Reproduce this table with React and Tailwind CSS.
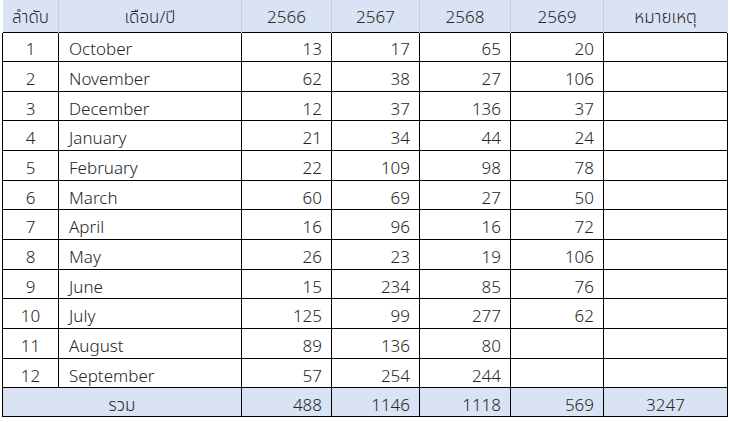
import React from 'react';

const rows = [
  [1, 'October', 13, 17, 65, 20],
  [2, 'November', 62, 38, 27, 106],
  [3, 'December', 12, 37, 136, 37],
  [4, 'January', 21, 34, 44, 24],
  [5, 'February', 22, 109, 98, 78],
  [6, 'March', 60, 69, 27, 50],
  [7, 'April', 16, 96, 16, 72],
  [8, 'May', 26, 23, 19, 106],
  [9, 'June', 15, 234, 85, 76],
  [10, 'July', 125, 99, 277, 62],
  [11, 'August', 89, 136, 80, ''],
  [12, 'September', 57, 254, 244, ''],
];

export default function App() {
  return (
    <div className="w-[730px] h-[422px] bg-white pl-[2px] text-[#262626] text-[17px] font-light" style={{ fontFamily: '"Noto Sans", "Noto Sans Thai", "DejaVu Sans", sans-serif' }}>
      <table className="border-collapse table-fixed w-[725px]">
        <colgroup>
          <col className="w-[56px]" />
          <col className="w-[183px]" />
          <col className="w-[90px]" />
          <col className="w-[88px]" />
          <col className="w-[91px]" />
          <col className="w-[93px]" />
          <col className="w-[124px]" />
        </colgroup>
        <thead>
          <tr className="h-[32px] bg-[#dae3f3]">
            <th className="font-light border-x border-[#c5cee0] border-l-transparent pt-[2px]">ลำดับ</th>
            <th className="font-light border-x border-[#c5cee0] pt-[2px]">เดือน/ปี</th>
            <th className="font-light border-x border-[#c5cee0] pt-[2px]">2566</th>
            <th className="font-light border-x border-[#c5cee0] pt-[2px]">2567</th>
            <th className="font-light border-x border-[#c5cee0] pt-[2px]">2568</th>
            <th className="font-light border-x border-[#c5cee0] pt-[2px]">2569</th>
            <th className="font-light border-x border-[#c5cee0] border-r-transparent pt-[2px]">หมายเหตุ</th>
          </tr>
        </thead>
        <tbody>
          {rows.map((r) => (
            <tr key={r[0]} className="h-[29.67px]">
              <td className="border border-black text-center leading-none pt-[4px]">{r[0]}</td>
              <td className="border border-black pl-[10px] leading-none pt-[4px]">{r[1]}</td>
              <td className="border border-black text-right pr-[9px] leading-none pt-[4px]">{r[2]}</td>
              <td className="border border-black text-right pr-[9px] leading-none pt-[4px]">{r[3]}</td>
              <td className="border border-black text-right pr-[9px] leading-none pt-[4px]">{r[4]}</td>
              <td className="border border-black text-right pr-[9px] leading-none pt-[4px]">{r[5]}</td>
              <td className="border border-black"></td>
            </tr>
          ))}
          <tr className="h-[29px] bg-[#dae3f3]">
            <td colSpan={2} className="border border-black text-center leading-none pt-[4px]">รวม</td>
            <td className="border border-black text-right pr-[9px] leading-none pt-[4px]">488</td>
            <td className="border border-black text-right pr-[9px] leading-none pt-[4px]">1146</td>
            <td className="border border-black text-right pr-[9px] leading-none pt-[4px]">1118</td>
            <td className="border border-black text-right pr-[9px] leading-none pt-[4px]">569</td>
            <td className="border border-black text-center leading-none pt-[4px]">3247</td>
          </tr>
        </tbody>
      </table>
    </div>
  );
}
